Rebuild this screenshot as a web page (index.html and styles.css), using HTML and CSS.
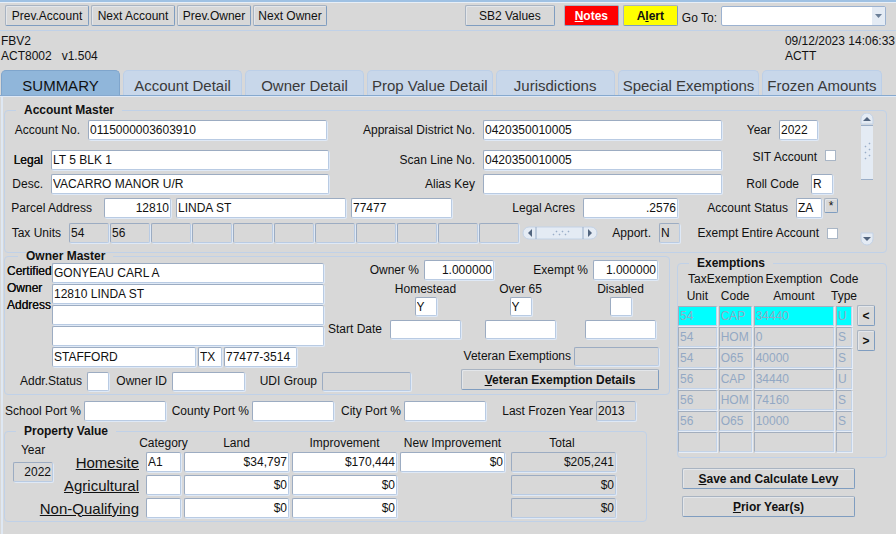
FILE: index.html
```html
<!DOCTYPE html>
<html lang="en">
<head>
    <meta charset="UTF-8">
    <title>ACT8002 - Account Summary</title>
    <link rel="stylesheet" href="styles.css">
</head>
<body>
    <!-- Toolbar -->
    <header class="toolbar">
        <button class="btn btn-wide">Prev.Account</button>
        <button class="btn btn-wide">Next Account</button>
        <button class="btn btn-mid">Prev.Owner</button>
        <button class="btn btn-mid">Next Owner</button>
        <div class="toolbar-right">
            <button class="btn btn-sb2">SB2 Values</button>
            <button class="btn btn-notes"><u>N</u>otes</button>
            <button class="btn btn-alert">A<u>l</u>ert</button>
            <label for="go-to">Go To:</label>
            <div class="select-box">
                <select id="go-to"><option></option></select>
                <svg viewBox="0 0 13 18" aria-hidden="true"><rect width="13" height="18" fill="#e4ebf4"/><path d="M3 7h7l-3.500 4z" fill="#6b7f98"/></svg>
            </div>
        </div>
    </header>

    <div class="info">
        <div>FBV2<br>ACT8002 &nbsp; v1.504</div>
        <div>09/12/2023 14:06:33<br>ACTT</div>
    </div>

    <nav class="tabs">
        <button class="tab active">SUMMARY</button>
        <button class="tab">Account Detail</button>
        <button class="tab">Owner Detail</button>
        <button class="tab">Prop Value Detail</button>
        <button class="tab">Jurisdictions</button>
        <button class="tab">Special Exemptions</button>
        <button class="tab">Frozen Amounts</button>
    </nav>

    <main class="panel">
        <!-- Account Master -->
        <fieldset class="group account">
            <legend>Account Master</legend>
            <div class="account-body">
                <div class="account-rows">
                    <div class="row row-number">
                        <label for="account-no">Account No.</label>
                        <input type="text" id="account-no" value="0115000003603910">
                        <label for="district-no">Appraisal District No.</label>
                        <input type="text" id="district-no" value="0420350010005">
                        <label for="year">Year</label>
                        <input type="text" id="year" value="2022">
                    </div>
                    <div class="row row-legal">
                        <label for="legal" class="strong">Legal</label>
                        <input type="text" id="legal" value="LT 5 BLK 1">
                        <label for="scan-line">Scan Line No.</label>
                        <input type="text" id="scan-line" value="0420350010005">
                        <label for="sit" class="top">SIT Account</label>
                        <input type="checkbox" id="sit" class="top">
                    </div>
                    <div class="row row-desc">
                        <label for="desc">Desc.</label>
                        <input type="text" id="desc" value="VACARRO MANOR U/R">
                        <label for="alias">Alias Key</label>
                        <input type="text" id="alias">
                        <label for="roll-code" class="far">Roll Code</label>
                        <input type="text" id="roll-code" value="R">
                    </div>
                    <div class="row row-parcel">
                        <label for="parcel" class="far">Parcel Address</label>
                        <input type="text" id="parcel" class="num" value="12810">
                        <span></span>
                        <input type="text" aria-label="Street" value="LINDA ST">
                        <span></span>
                        <input type="text" aria-label="Zip" value="77477">
                        <label for="acres">Legal Acres</label>
                        <input type="text" id="acres" class="num" value=".2576">
                        <label for="status">Account Status</label>
                        <input type="text" id="status" value="ZA">
                        <span></span>
                        <button class="btn btn-star">*</button>
                    </div>
                    <div class="row row-units">
                        <label for="unit-1">Tax Units</label>
                        <div class="units">
                            <input type="text" id="unit-1" value="54" readonly>
                            <input type="text" aria-label="Unit 2" value="56" readonly>
                            <input type="text" aria-label="Unit 3" readonly>
                            <input type="text" aria-label="Unit 4" readonly>
                            <input type="text" aria-label="Unit 5" readonly>
                            <input type="text" aria-label="Unit 6" readonly>
                            <input type="text" aria-label="Unit 7" readonly>
                            <input type="text" aria-label="Unit 8" readonly>
                            <input type="text" aria-label="Unit 9" readonly>
                            <input type="text" aria-label="Unit 10" readonly>
                            <input type="text" aria-label="Unit 11" readonly>
                        </div>
                        <span></span>
                        <svg class="scroll-h" viewBox="0 0 76 14" aria-hidden="true">
                            <rect x="1" y="1" width="74" height="12" rx="6" fill="#e4ebf4" stroke="#c3d2e6"/>
                            <path d="M10 3v8l-4-4zM66 3v8l4-4z" fill="#52657f"/>
                            <path d="M14 1v12M61 1v12" stroke="#9aaec8"/>
                            <path d="M31 9l1-1M34 6l1-1M37 9l1-1M40 6l1-1M43 9l1-1M46 6l1-1" stroke="#9aaec8" stroke-width="1.500"/>
                        </svg>
                        <label for="apport">Apport.</label>
                        <input type="text" id="apport" value="N" readonly>
                        <label for="exempt-all">Exempt Entire Account</label>
                        <input type="checkbox" id="exempt-all">
                    </div>
                </div>
                <div class="scroll-v" aria-hidden="true">
                    <svg width="14" height="68" viewBox="0 0 14 68">
                        <path d="M1 11V6a6 6 0 0 1 12 0v5z" fill="#e4ebf4" stroke="#c3d2e6"/>
                        <path d="M3 8h8L7 4z" fill="#52657f"/>
                        <rect x="1" y="13" width="12" height="54" fill="#e4ebf4"/>
                        <path d="M1 12.500h12M1 66.500h12" stroke="#9aaec8"/>
                        <path d="M5 34l1-1M9 31l1-1M5 40l1-1M9 37l1-1M5 46l1-1M9 43l1-1" stroke="#9aaec8" stroke-width="1.500"/>
                    </svg>
                    <svg width="14" height="14" viewBox="0 0 14 14">
                        <path d="M1 1v6a6 6 0 0 0 12 0V1z" fill="#e4ebf4" stroke="#c3d2e6"/>
                        <path d="M3 5h8L7 9z" fill="#52657f"/>
                    </svg>
                </div>
            </div>
        </fieldset>

        <div class="lower">
            <div class="left">
                <!-- Owner Master -->
                <fieldset class="group owner">
                    <legend>Owner Master</legend>
                    <div class="owner-top">
                        <div class="address">
                            <label for="owner-name" class="strong">Certified<br>Owner<br>Address</label>
                            <div class="address-lines">
                                <input type="text" id="owner-name" value="GONYEAU CARL A">
                                <input type="text" aria-label="Address 1" value="12810 LINDA ST">
                                <input type="text" aria-label="Address 2">
                                <input type="text" aria-label="Address 3">
                                <div class="city">
                                    <input type="text" aria-label="City" value="STAFFORD">
                                    <input type="text" aria-label="State" value="TX">
                                    <input type="text" aria-label="Zip" value="77477-3514">
                                </div>
                            </div>
                        </div>
                        <div class="shares">
                            <div class="row row-percent">
                                <label for="owner-pct">Owner %</label>
                                <input type="text" id="owner-pct" class="num" value="1.000000">
                                <label for="exempt-pct">Exempt %</label>
                                <input type="text" id="exempt-pct" class="num" value="1.000000">
                            </div>
                            <div class="flags">
                                <label for="start-1" class="start">Start Date</label>
                                <div class="flag">
                                    <label for="homestead">Homestead</label>
                                    <input type="text" id="homestead" value="Y">
                                    <input type="text" id="start-1">
                                </div>
                                <span></span>
                                <div class="flag">
                                    <label for="over65">Over 65</label>
                                    <input type="text" id="over65" value="Y">
                                    <input type="text" aria-label="Over 65 start date">
                                </div>
                                <span></span>
                                <div class="flag">
                                    <label for="disabled">Disabled</label>
                                    <input type="text" id="disabled">
                                    <input type="text" aria-label="Disabled start date">
                                </div>
                            </div>
                            <div class="row row-veteran">
                                <label for="veteran">Veteran Exemptions</label>
                                <input type="text" id="veteran" readonly>
                            </div>
                        </div>
                    </div>
                    <div class="row row-status">
                        <label for="addr-status">Addr.Status</label>
                        <input type="text" id="addr-status">
                        <label for="owner-id">Owner ID</label>
                        <input type="text" id="owner-id">
                        <label for="udi">UDI Group</label>
                        <input type="text" id="udi" readonly>
                        <span></span>
                        <button class="btn bold top"><u>V</u>eteran Exemption Details</button>
                    </div>
                </fieldset>

                <div class="row row-port">
                    <label for="school">School Port %</label>
                    <input type="text" id="school">
                    <label for="county">County Port %</label>
                    <input type="text" id="county">
                    <label for="city-port">City Port %</label>
                    <input type="text" id="city-port">
                    <label for="frozen">Last Frozen Year</label>
                    <input type="text" id="frozen" value="2013" readonly>
                </div>

                <!-- Property Value -->
                <fieldset class="group property">
                    <legend>Property Value</legend>
                    <div class="property-body">
                        <div class="property-year">
                            <label for="value-year">Year</label>
                            <input type="text" id="value-year" class="num" value="2022" readonly>
                        </div>
                        <table class="values">
                            <colgroup>
                                <col class="c-name"><col class="c-cat"><col class="c-amt"><col class="c-amt"><col class="c-amt"><col class="c-total">
                            </colgroup>
                            <thead>
                                <tr>
                                    <td></td>
                                    <th><span>Category</span></th>
                                    <th>Land</th>
                                    <th>Improvement</th>
                                    <th>New Improvement</th>
                                    <th>Total</th>
                                </tr>
                            </thead>
                            <tbody>
                                <tr>
                                    <th><a href="#">Homesite</a></th>
                                    <td><input type="text" aria-label="Homesite category" value="A1"></td>
                                    <td><input type="text" class="num" aria-label="Homesite land" value="$34,797"></td>
                                    <td><input type="text" class="num" aria-label="Homesite improvement" value="$170,444"></td>
                                    <td><input type="text" class="num" aria-label="Homesite new improvement" value="$0"></td>
                                    <td class="total"><input type="text" class="num" aria-label="Homesite total" value="$205,241" readonly></td>
                                </tr>
                                <tr>
                                    <th><a href="#">Agricultural</a></th>
                                    <td><input type="text" aria-label="Agricultural category"></td>
                                    <td><input type="text" class="num" aria-label="Agricultural land" value="$0"></td>
                                    <td><input type="text" class="num" aria-label="Agricultural improvement" value="$0"></td>
                                    <td></td>
                                    <td class="total"><input type="text" class="num" aria-label="Agricultural total" value="$0" readonly></td>
                                </tr>
                                <tr>
                                    <th><a href="#">Non-Qualifying</a></th>
                                    <td><input type="text" aria-label="Non-Qualifying category"></td>
                                    <td><input type="text" class="num" aria-label="Non-Qualifying land" value="$0"></td>
                                    <td><input type="text" class="num" aria-label="Non-Qualifying improvement" value="$0"></td>
                                    <td></td>
                                    <td class="total"><input type="text" class="num" aria-label="Non-Qualifying total" value="$0" readonly></td>
                                </tr>
                            </tbody>
                        </table>
                    </div>
                </fieldset>
            </div>

            <!-- Exemptions -->
            <div class="right">
                <fieldset class="group exemptions">
                    <legend>Exemptions</legend>
                    <div class="exemptions-body">
                        <table class="exempt-table">
                            <colgroup>
                                <col class="e-unit"><col class="e-code"><col class="e-amount"><col class="e-type">
                            </colgroup>
                            <thead>
                                <tr>
                                    <th><span>Tax<br>Unit</span></th>
                                    <th><span>Exemption<br>Code</span></th>
                                    <th><span>Exemption<br>Amount</span></th>
                                    <th><span>Code<br>Type</span></th>
                                </tr>
                            </thead>
                            <tbody>
                                <tr class="selected"><td>54</td><td>CAP</td><td>34440</td><td>U</td></tr>
                                <tr><td>54</td><td>HOM</td><td>0</td><td>S</td></tr>
                                <tr><td>54</td><td>O65</td><td>40000</td><td>S</td></tr>
                                <tr><td>56</td><td>CAP</td><td>34440</td><td>U</td></tr>
                                <tr><td>56</td><td>HOM</td><td>74160</td><td>S</td></tr>
                                <tr><td>56</td><td>O65</td><td>10000</td><td>S</td></tr>
                                <tr><td></td><td></td><td></td><td></td></tr>
                            </tbody>
                        </table>
                        <div class="pager">
                            <button class="btn bold">&lt;</button>
                            <button class="btn bold">&gt;</button>
                        </div>
                    </div>
                </fieldset>
                <div class="actions">
                    <button class="btn bold"><u>S</u>ave and Calculate Levy</button>
                    <button class="btn bold"><u>P</u>rior Year(s)</button>
                </div>
            </div>
        </div>
    </main>
</body>
</html>
```

FILE: styles.css
```css
* {
    box-sizing: border-box;
}

body {
    display: flex;
    flex-direction: column;
    min-height: 100vh;
    margin: 0;
    background-color: #d8d8d8;
    color: #111;
    font-family: "Liberation Sans", Arial, sans-serif;
    font-size: 12px;
    line-height: 15px;
}

/* Inputs */
input, select, button {
    margin: 0;
    font-family: inherit;
    font-size: 12px;
    color: #111;
}

input[type="text"] {
    width: 100%;
    min-width: 0;
    height: 20px;
    padding: 0 1px;
    background-color: #fff;
    border: 1px solid #b9cbe3;
    border-top-color: #9cacc2;
    border-left-color: #9cacc2;
    border-radius: 2px;
    box-shadow: 1px 1px 0 #dfe9f6;
}

input[readonly] {
    background-color: #d8d8d8;
}

input.num {
    text-align: right;
}

input[type="checkbox"] {
    appearance: none;
    width: 11px;
    height: 11px;
    background-color: #fff;
    border: 1px solid #a9b6c6;
}

label {
    white-space: nowrap;
}

.strong {
    text-shadow: 0 0 0 #000;
}

/* Buttons */
.btn {
    height: 21px;
    padding: 0;
    background-color: #d8d8d8;
    border: 1px solid #a9b4c2;
    border-right-color: #7f9dc0;
    border-bottom-color: #7f9dc0;
    border-radius: 2px;
    box-shadow: inset 1px 1px 0 #e3e6ea;
    white-space: nowrap;
}

.bold {
    font-weight: bold;
}

/* Toolbar */
.toolbar {
    display: flex;
    gap: 2px;
    padding: 3px 10px 4px 5px;
    border-top: 2px solid #9fc1e3;
    border-bottom: 1px solid #c0d1e8;
    box-shadow: inset 0 1px 0 #e8eff7;
}

.btn-wide {
    width: 84px;
}

.btn-mid {
    width: 74px;
}

.toolbar-right {
    display: flex;
    align-items: end;
    gap: 4px;
    margin-left: auto;
}

.btn-sb2 {
    width: 90px;
    margin-right: 5px;
}

.btn-notes, .btn-alert {
    width: 55px;
    font-weight: bold;
    box-shadow: none;
}

.btn-notes {
    background-color: #f00;
    color: #fff;
}

.btn-alert {
    background-color: #ff0;
}

.select-box {
    position: relative;
    width: 165px;
    height: 20px;
}

.select-box select {
    appearance: none;
    width: 100%;
    height: 100%;
    background-color: #fff;
    border: 1px solid #9cb2d0;
    border-radius: 2px;
}

.select-box svg {
    position: absolute;
    top: 1px;
    right: 1px;
    width: 13px;
    height: 18px;
    pointer-events: none;
}

.info {
    display: flex;
    justify-content: space-between;
    padding: 3px 1px 6px;
}

/* Tabs */
.tabs {
    display: flex;
    gap: 3px;
    padding-left: 1px;
    border-bottom: 1px solid #86a9cf;
    box-shadow: 0 1px 0 #dfe9f6;
}

.tab {
    min-width: 119px;
    height: 25px;
    padding: 4px 4px 0;
    background-color: #c8d7ea;
    border: 1px solid #bccfe8;
    border-bottom: none;
    border-radius: 5px 5px 0 0;
    color: #3a3a3a;
    font-size: 15px;
    white-space: nowrap;
}

.tab.active {
    background-color: #90b6da;
    border-color: #7fa5cc;
    color: #111;
}

/* Panel and groups */
.panel {
    flex: 1;
    margin-left: 1px;
    padding: 11px 9px 0 1px;
    border-left: 2px solid #dfe8f3;
}

.group {
    min-width: 0;
    margin: 0;
    padding: 0;
    border: 1px solid #c0d1e8;
    border-radius: 4px;
}

.group legend {
    margin-left: 11px;
    padding: 0 8px;
    font-weight: bold;
    line-height: 6px;
}

.row {
    display: grid;
    align-items: center;
}

.row label {
    padding-right: 8px;
    text-align: right;
}

.row .far {
    padding-right: 12px;
}

.row .top {
    align-self: start;
}

/* Account Master */
.account-body {
    display: flex;
    gap: 12px;
    padding: 0 12px 6px 3px;
}

.account-rows {
    display: flex;
    flex: 1;
    flex-direction: column;
    gap: 4px;
    padding: 7px 0 3px;
}

.row-number {
    grid-template-columns: 80px 239fr 156px 239fr 57px 39px 30px;
    margin-bottom: 6px;
}

.row-legal {
    grid-template-columns: 43px 278fr 154px 239fr 103px 11px 12px;
}

.row-desc {
    grid-template-columns: 43px 278fr 154px 239fr 89px 22px 15px;
}

.row-parcel {
    grid-template-columns: 96px 67fr 5px 170fr 5px 101fr 131px 95fr 118px 26px 2px 14px 10px;
    margin-bottom: 1px;
}

.row-units {
    grid-template-columns: 61px 450fr 3px 76px 61px 21px 147px 11px 10px;
}

.units {
    display: grid;
    grid-template-columns: repeat(11, 1fr);
    gap: 1px;
}

.scroll-h {
    width: 76px;
    height: 14px;
}

.scroll-v {
    display: flex;
    flex-direction: column;
    justify-content: space-between;
    width: 14px;
}

.btn-star {
    align-self: start;
    height: 15px;
    line-height: 12px;
}

/* Owner Master */
.lower {
    display: grid;
    grid-template-columns: 1fr 210px;
    gap: 7px;
}

.left {
    min-width: 0;
}

.owner {
    padding: 1px 7px 3px 2px;
}

.owner-top {
    display: grid;
    grid-template-columns: 317fr 338fr;
}

.address {
    display: grid;
    grid-template-columns: 45px 1fr;
    padding-top: 3px;
    line-height: 17px;
}

.address-lines {
    display: grid;
    gap: 1px;
}

.city {
    display: grid;
    grid-template-columns: 144fr 24px 73px;
    gap: 2px;
    padding-right: 27px;
}

.row-percent {
    grid-template-columns: 100px 70fr 99px 65fr 4px;
}

.row-percent label, .row-status label {
    padding-right: 5px;
}

.flags {
    display: grid;
    grid-template-columns: 66px 71fr 24px 71fr 29px 71fr;
    padding: 2px 6px 8px 0;
}

.flags .start {
    align-self: end;
    padding: 0 8px 2px 0;
    text-align: right;
}

.flag {
    display: flex;
    flex-direction: column;
    align-items: center;
}

.flags input, .row-veteran input, .row-status input {
    height: 19px;
}

.flag label + input {
    width: 22px;
    margin-bottom: 4px;
}

.row-veteran {
    grid-template-columns: 250px 85fr 3px;
}

.row-veteran label, .row-port label {
    padding-right: 3px;
}

.row-status {
    grid-template-columns: 80px 22px 63px 73fr 77px 89fr 50px 198fr 3px;
    align-items: end;
    min-height: 24px;
    padding-top: 2px;
}

.row-status label {
    line-height: 19px;
}

.row-port {
    grid-template-columns: 80px 82fr 86px 82fr 70px 82fr 110px 40px 34px;
    padding: 6px 0 7px;
}

/* Property Value */
.property {
    margin-right: 23px;
}

.property-body {
    display: flex;
    padding: 0 27px 0 8px;
}

.property-year {
    flex: 0 0 40px;
    padding-top: 9px;
    text-align: center;
}

.property-year input {
    margin-top: 4px;
}

.values {
    flex: 1;
    table-layout: fixed;
    width: 100%;
    border-spacing: 3px;
}

.values th, .values td {
    height: 20px;
    padding: 0;
    font-weight: normal;
}

.values thead th, .values thead td {
    height: 12px;
    line-height: 12px;
    white-space: nowrap;
}

.values thead span {
    display: block;
    margin: 0 -10px;
}

.values tbody th {
    text-align: right;
    font-size: 15px;
    white-space: nowrap;
}

.values a {
    display: block;
    margin: 0 4px 0 -20px;
    color: #111;
}

.values input {
    display: block;
}

.values .total {
    padding-left: 3px;
}

.c-name {
    width: 87px;
}

.c-cat {
    width: 35px;
}

.c-amt {
    width: 105px;
}

.c-total {
    width: 108px;
}

/* Exemptions */
.right {
    padding-top: 7px;
}

.exemptions-body {
    display: flex;
    gap: 3px;
    padding: 4px 11px 4px 0;
}

.exempt-table {
    flex: 1;
    table-layout: fixed;
    margin-left: -2px;
    border-spacing: 2px 1px;
}

.exempt-table th, .exempt-table td {
    padding: 0;
    font-weight: normal;
}

.exempt-table th {
    line-height: 17px;
    white-space: nowrap;
}

.exempt-table th span {
    display: block;
    margin: 0 -12px;
}

.exempt-table td {
    height: 20px;
    padding-left: 1px;
    border: 1px solid #c3d3e8;
    border-top-color: #a3aebd;
    border-left-color: #a3aebd;
    box-shadow: 1px 1px 0 #e6edf7;
    color: #93a8c4;
}

.exempt-table .selected td {
    background-color: #0ff;
}

.e-unit {
    width: 39px;
}

.e-code {
    width: 33px;
}

.e-amount {
    width: 81px;
}

.e-type {
    width: 16px;
}

.pager {
    display: flex;
    flex: 0 0 18px;
    flex-direction: column;
    gap: 4px;
    padding-top: 35px;
}

.actions {
    display: grid;
    gap: 7px;
    padding: 10px 32px 0 5px;
}
```
